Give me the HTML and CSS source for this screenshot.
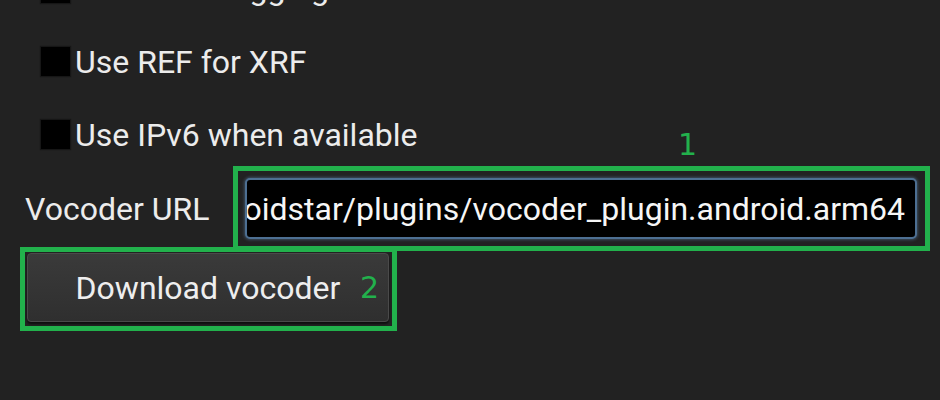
FILE: index.html
```html
<!DOCTYPE html>
<html>
<head>
<meta charset="utf-8">
<link rel="stylesheet" href="styles.css">
</head>
<body>
<div class="screen">
  <div class="settings">
    <div class="check-row"><span class="box"></span><span class="check-text">Enable debugging</span></div>
    <div class="check-row"><span class="box"></span><span class="check-text">Use REF for XRF</span></div>
    <div class="check-row"><span class="box"></span><span class="check-text">Use IPv6 when available</span></div>
    <div class="url-row">
      <span class="url-label">Vocoder URL</span>
      <div class="url-input"><span class="url-text">https://www.dudetronics.com/ar-dns/droidstar/plugins/vocoder_plugin.android.arm64</span></div>
    </div>
    <div class="btn-row">
      <div class="btn">Download vocoder</div>
    </div>
  </div>
  <div class="mark mark-1"></div>
  <div class="mark mark-2"></div>
  <span class="mark-num num-1">1</span>
  <span class="mark-num num-2">2</span>
</div>
</body>
</html>
```
FILE: styles.css
```css
html, body {
  margin: 0;
  padding: 0;
  background: #222222;
}
.screen {
  position: relative;
  width: 940px;
  height: 400px;
  overflow: hidden;
  background: #222222;
  font-family: Roboto, "Noto Sans", sans-serif;
  color: #ececec;
}
.settings {
  margin-top: -48px;
  display: flex;
  flex-direction: column;
}
.check-row {
  height: 73px;
  display: flex;
  align-items: center;
  padding-left: 41px;
  gap: 5px;
  font-size: 32px;
}
.box {
  width: 29px;
  height: 29px;
  background: #000;
  box-shadow: 0 0 1px 1px #161616;
  flex: 0 0 auto;
}
.check-text {
  white-space: nowrap;
}
.url-row {
  display: flex;
  align-items: center;
  padding-left: 25px;
  padding-top: 7px;
  font-size: 32px;
}
.url-label {
  flex: 0 0 220px;
  white-space: nowrap;
}
.url-input {
  width: 672px;
  height: 61px;
  box-sizing: border-box;
  background: #000;
  border: 2px solid #4d6f92;
  border-radius: 5px;
  box-shadow: 0 0 3px 1px rgba(90, 130, 170, 0.45);
  display: flex;
  align-items: center;
  justify-content: flex-end;
  overflow: hidden;
  padding-right: 10px;
  color: #f6f6f6;
}
.url-text {
  white-space: nowrap;
  flex: 0 0 auto;
}
.btn-row {
  padding-left: 27px;
  padding-top: 14px;
}
.btn {
  width: 362px;
  height: 69px;
  box-sizing: border-box;
  border: 1px solid #4a4a4a;
  border-radius: 4px;
  background: linear-gradient(#3a3a3a, #2f2f2f);
  box-shadow: 0 2px 2px rgba(0, 0, 0, 0.6);
  display: flex;
  align-items: center;
  justify-content: center;
  font-size: 32px;
  color: #eeeeee;
}
.mark {
  position: absolute;
  box-sizing: border-box;
  border: 5px solid #22b14c;
}
.mark-1 {
  left: 233px;
  top: 166px;
  width: 697px;
  height: 85px;
}
.mark-2 {
  left: 20px;
  top: 247px;
  width: 377px;
  height: 84px;
}
.mark-num {
  position: absolute;
  font-family: "DejaVu Sans", sans-serif;
  font-size: 30px;
  line-height: 1;
  color: #22b14c;
}
.num-1 {
  left: 678px;
  top: 130px;
}
.num-2 {
  left: 360px;
  top: 273px;
}
```
